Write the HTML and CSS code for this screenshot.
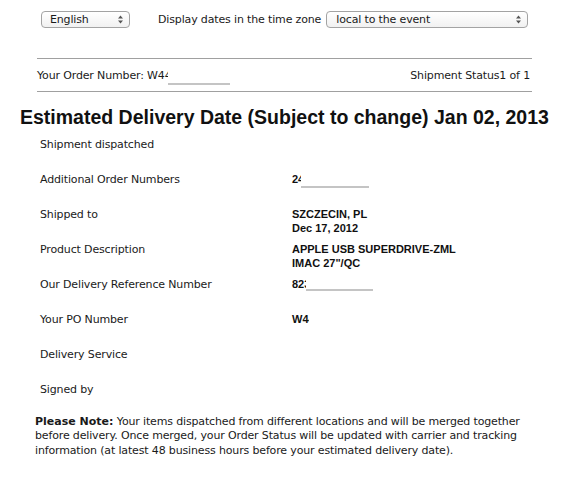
FILE: index.html
```html
<!DOCTYPE html>
<html>
<head>
<meta charset="utf-8">
<link rel="stylesheet" href="styles.css">
</head>
<body>
<div class="page">
  <div class="prefs">
    <span class="select-wrap lang">
      <select class="select"><option>English</option></select>
      <svg class="arrows" width="5" height="9" viewBox="0 0 5 9"><path d="M2.5 0.5 L5 3.5 H0 Z M2.5 8.5 L5 5.5 H0 Z" fill="#555"/></svg>
    </span>
    <span class="tz-label">Display dates in the time zone</span>
    <span class="select-wrap tz">
      <select class="select"><option>local to the event</option></select>
      <svg class="arrows" width="5" height="9" viewBox="0 0 5 9"><path d="M2.5 0.5 L5 3.5 H0 Z M2.5 8.5 L5 5.5 H0 Z" fill="#555"/></svg>
    </span>
  </div>

  <div class="order-bar">
    <span class="order-num">Your Order Number: <span class="masked">W44<span class="redact r-order"></span></span></span>
    <span class="status">Shipment Status1 of 1</span>
  </div>

  <h1 class="headline">Estimated Delivery Date (Subject to change) Jan 02, 2013</h1>

  <div class="details">
    <div class="label">Shipment dispatched</div>
    <div class="value"></div>

    <div class="label">Additional Order Numbers</div>
    <div class="value"><span class="masked">24<span class="redact r-add"></span></span></div>

    <div class="label">Shipped to</div>
    <div class="value">SZCZECIN, PL<br>Dec 17, 2012</div>

    <div class="label">Product Description</div>
    <div class="value">APPLE USB SUPERDRIVE-ZML<br>IMAC 27"/QC</div>

    <div class="label">Our Delivery Reference Number</div>
    <div class="value"><span class="masked">823<span class="redact r-ref"></span></span></div>

    <div class="label">Your PO Number</div>
    <div class="value"><span class="masked">W44<span class="redact r-po"></span></span></div>

    <div class="label">Delivery Service</div>
    <div class="value"></div>

    <div class="label">Signed by</div>
    <div class="value"></div>
  </div>

  <p class="note"><b class="note-lead">Please Note:</b> Your items dispatched from different locations and will be merged together before delivery. Once merged, your Order Status will be updated with carrier and tracking information (at latest 48 business hours before your estimated delivery date).</p>
</div>
</body>
</html>
```

FILE: styles.css
```css
html, body {
  margin: 0;
  padding: 0;
  background: #ffffff;
}

.page {
  font-family: "DejaVu Sans", "Liberation Sans", sans-serif;
  font-size: 11px;
  letter-spacing: -0.15px;
  color: #1a1a1a;
}

.prefs {
  display: flex;
  align-items: center;
  padding: 11px 0 0 41px;
  height: 17px;
}

.select-wrap {
  position: relative;
  display: inline-block;
  height: 17px;
}

.select-wrap.lang { width: 89px; }
.select-wrap.tz { width: 202px; margin-left: 5px; }

.select {
  -webkit-appearance: none;
  appearance: none;
  box-sizing: border-box;
  width: 100%;
  height: 17px;
  margin: 0;
  padding: 0 0 0 8px;
  border: 1px solid #a3a3a3;
  border-radius: 4px;
  background: linear-gradient(#ffffff, #f1f1f1);
  font-family: "DejaVu Sans", "Liberation Sans", sans-serif;
  font-size: 11px;
  letter-spacing: -0.15px;
  color: #1a1a1a;
  line-height: 15px;
}

.tz .select { padding-left: 9px; }

.arrows {
  position: absolute;
  right: 7px;
  top: 4px;
}

.tz-label {
  margin-left: 28px;
}

.order-bar {
  display: flex;
  justify-content: space-between;
  align-items: center;
  margin: 30px 0 0 37px;
  width: 495px;
  height: 32px;
  border-top: 1px solid #a0a0a0;
  border-bottom: 1px solid #a0a0a0;
  line-height: 13px;
}

.status { margin-right: 2px; }

.masked {
  position: relative;
  display: inline-block;
}

.redact {
  position: absolute;
  background: #ffffff;
}

.r-order {
  left: 21px;
  width: 62px;
  top: -3px;
  height: 17px;
  border-bottom: 2px solid #c4c4c4;
}

.r-add {
  left: 9px;
  width: 68px;
  top: -2px;
  height: 15px;
  border-bottom: 2px solid #c4c4c4;
}

.r-ref {
  left: 14px;
  width: 67px;
  top: -2px;
  height: 13px;
  border-bottom: 2px solid #c4c4c4;
}

.r-po {
  left: 17px;
  width: 40px;
  top: -2px;
  height: 16px;
}

.headline {
  margin: 14px 0 0 20px;
  font-family: "Liberation Sans", Arial, sans-serif;
  font-size: 19.5px;
  line-height: 22px;
  font-weight: bold;
  letter-spacing: 0;
  color: #111111;
  white-space: nowrap;
}

.details {
  display: grid;
  grid-template-columns: 252px auto;
  grid-template-rows: repeat(7, 35px) 13.5px;
  margin: 10px 0 0 40px;
  line-height: 13.5px;
}

.value {
  font-family: "Liberation Sans", Arial, sans-serif;
  font-weight: bold;
  letter-spacing: 0;
  color: #111111;
}

.note {
  margin: 18px 0 0 35px;
  width: 495px;
  line-height: 14.5px;
}

.note-lead {
  font-weight: bold;
  letter-spacing: 0;
}
```
